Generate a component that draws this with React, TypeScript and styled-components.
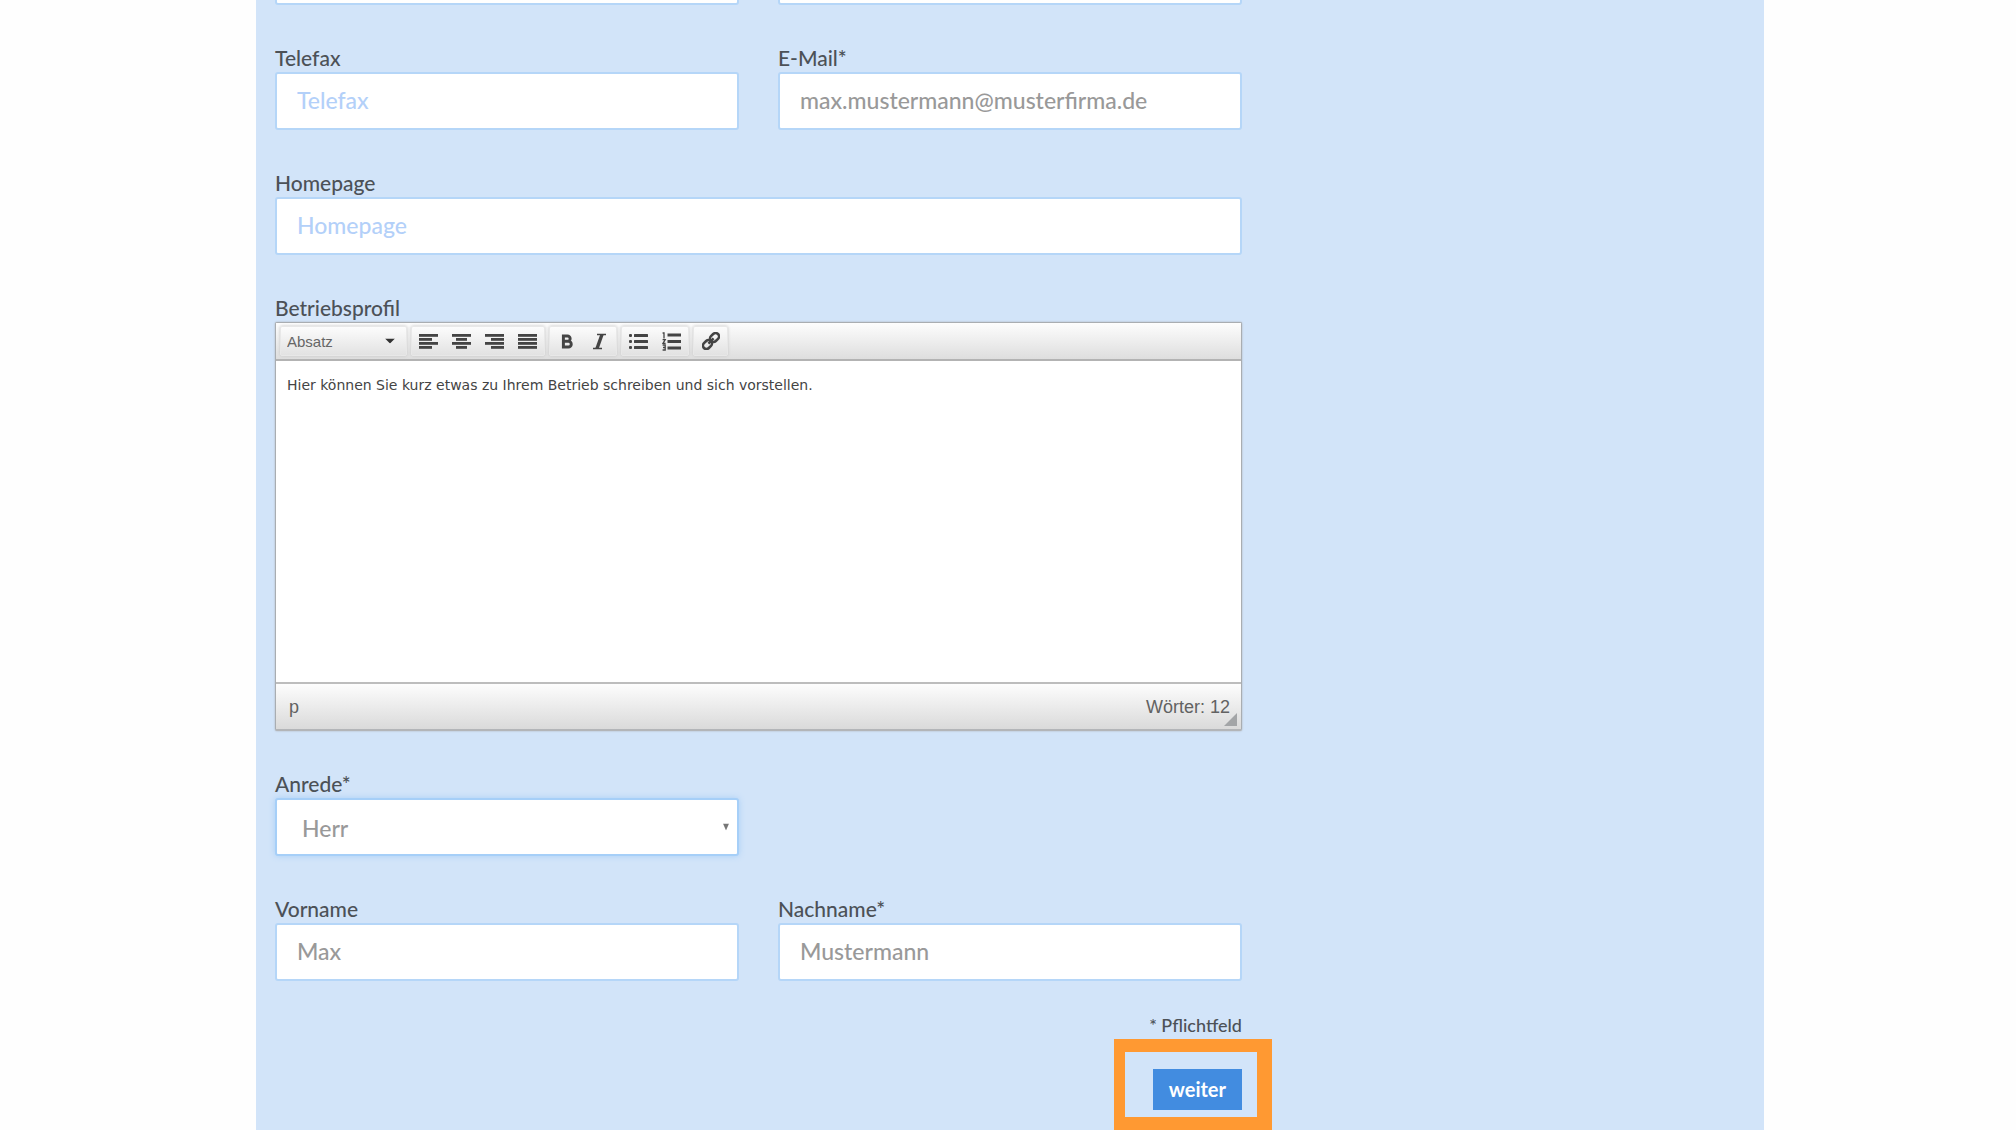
import React from "react";
import styled, { createGlobalStyle } from "styled-components";

const textFont = '"Lato", "Open Sans", sans-serif';
const uiFont = '"Liberation Sans", Arial, sans-serif';

const GlobalStyle = createGlobalStyle`
  *, *::before, *::after { box-sizing: border-box; }
  body { margin: 0; background: #fefefe; font-family: ${textFont}; font-weight: 500; color: #4c5157; }
  button, input, select, textarea { font: inherit; color: inherit; margin: 0; }
`;

const Page = styled.div`
  display: flex;
  justify-content: center;
  min-height: 100vh;
  padding-left: 4px;
  overflow: hidden;
`;

const Panel = styled.main`
  width: 100%;
  max-width: 1508px;
  padding: 0 19px;
  background: #d2e4f9;
`;

const Form = styled.form`
  display: flex;
  flex-direction: column;
  gap: 39px;
  max-width: 967px;
  margin-top: -53px;
`;

const Row = styled.div`
  display: grid;
  grid-template-columns: 1fr 1fr;
  column-gap: 39px;
`;

const Field = styled.div<{ $wide?: boolean }>`
  display: flex;
  flex-direction: column;
  min-width: 0;
  grid-column: ${(p) => (p.$wide ? "1 / -1" : "auto")};
`;

const Label = styled.label`
  font-size: 21px;
  line-height: 28px;
`;

const TextBox = styled.input`
  width: 100%;
  height: 58px;
  padding: 0 20px 2px;
  border: 2px solid #b5d6f8;
  border-radius: 3px;
  background: #fff;
  font-size: 23px;
  color: #999;
  outline: none;
  &::placeholder { color: #b3d0f9; opacity: 1; }
`;

const SelectWrap = styled.div`
  position: relative;
  display: flex;
`;

const SelectBox = styled.select`
  appearance: none;
  width: 100%;
  height: 58px;
  padding: 2px 24px 0 25px;
  border: 2px solid #a6cff8;
  border-radius: 3px;
  background: #fff;
  box-shadow: 0 0 6px #a9cff6;
  font-size: 23px;
  color: #999;
  outline: none;
`;

const Arrow = styled.svg<{ $right: number }>`
  position: absolute;
  right: ${(p) => p.$right}px;
  top: 50%;
  transform: translateY(-50%);
  pointer-events: none;
`;

const Editor = styled.div`
  display: flex;
  flex-direction: column;
  border: 1px solid #a9adb1;
  border-bottom: 2px solid #b3b5b8;
  border-radius: 2px;
  background: #fff;
  box-shadow: 0 0 2px #a9adb1;
`;

const Toolbar = styled.div`
  display: flex;
  align-items: center;
  gap: 4px;
  height: 38px;
  padding: 0 4px;
  border-bottom: 2px solid #b3b3b3;
  background: linear-gradient(#fdfdfd, #dedede);
`;

const Group = styled.div`
  position: relative;
  display: flex;
  height: 30px;
  border: 1px solid #e8e8e8;
  border-radius: 2px;
  background: linear-gradient(#fcfcfc, #e2e2e2);
  box-shadow: 0 0 3px #c4c4c4;
`;

const FormatSelect = styled.select`
  appearance: none;
  width: 125px;
  padding: 0 24px 0 6px;
  border: 0;
  background: transparent;
  font-family: ${uiFont};
  font-size: 15px;
  font-weight: 400;
  color: #666;
  outline: none;
`;

const Tool = styled.button`
  display: flex;
  align-items: center;
  justify-content: center;
  width: 33px;
  padding: 0;
  border: 0;
  background: transparent;
  color: #444;
`;

const Content = styled.textarea`
  display: block;
  height: 321px;
  padding: 13px 11px;
  border: 0;
  background: #fff;
  font-family: "DejaVu Sans", Verdana, sans-serif;
  font-size: 14px;
  font-weight: 400;
  line-height: 22px;
  color: #444;
  resize: none;
  outline: none;
`;

const StatusBar = styled.div`
  position: relative;
  display: flex;
  justify-content: space-between;
  height: 47px;
  padding: 11px 11px 0 13px;
  border-top: 2px solid #bdbdbd;
  background: linear-gradient(#fdfdfd, #dadada);
  font-family: ${uiFont};
  font-size: 18px;
  font-weight: 400;
  line-height: 24px;
  color: #626262;
`;

const Grip = styled.svg`
  position: absolute;
  right: 4px;
  bottom: 3px;
`;

const Footer = styled.div`
  display: flex;
  flex-direction: column;
  align-items: flex-end;
  margin-top: -8px;
`;

const Note = styled.p`
  margin: 0;
  font-size: 18px;
  line-height: 27px;
`;

const Frame = styled.div`
  margin-right: -30px;
  padding: 17px 15px 7px 28px;
  border: solid #ff9932;
  border-width: 13px 15px 13px 11px;
`;

const Submit = styled.button`
  display: block;
  height: 41px;
  padding: 0 16px 2px;
  border: 0;
  background: #428ce0;
  color: #fff;
  font-size: 20px;
  font-weight: 700;
`;

function Lines({ rows }: { rows: [number, number][] }) {
  return (
    <svg width="19" height="17" viewBox="0 0 19 17" fill="currentColor" aria-hidden="true">
      {rows.map(([x, w], i) => (
        <rect key={i} x={x} y={i * 4 + 1} width={w} height="2.8" />
      ))}
    </svg>
  );
}

const alignments: { name: string; rows: [number, number][] }[] = [
  { name: "Linksbündig", rows: [[0, 19], [0, 13], [0, 19], [0, 13]] },
  { name: "Zentriert", rows: [[0, 19], [4, 11], [0, 19], [4, 11]] },
  { name: "Rechtsbündig", rows: [[0, 19], [6, 13], [0, 19], [6, 13]] },
  { name: "Blocksatz", rows: [[0, 19], [0, 19], [0, 19], [0, 19]] },
];

function BoldIcon() {
  return (
    <svg width="12" height="17" viewBox="0 0 13 17" fill="none" stroke="currentColor" strokeWidth="3.2" aria-hidden="true">
      <path d="M2.6 2.5H7a2.8 2.8 0 0 1 0 5.8H2.6zM2.6 8.3H8a3.1 3.1 0 0 1 0 6.2H2.6z" />
    </svg>
  );
}

function ItalicIcon() {
  return (
    <svg width="15" height="17" viewBox="0 0 15 17" fill="none" stroke="currentColor" aria-hidden="true">
      <path d="M5 1.5h9M1 15.5h9" strokeWidth="1.6" />
      <path d="M10 1.5 5 15.5" strokeWidth="3.4" />
    </svg>
  );
}

function BulletIcon() {
  return (
    <svg width="19" height="17" viewBox="0 0 19 17" fill="currentColor" aria-hidden="true">
      {[1, 7, 13].map((y) => (
        <React.Fragment key={y}>
          <rect x="0" y={y} width="3" height="3" rx="1" />
          <rect x="5" y={y} width="14" height="3" rx="0.5" />
        </React.Fragment>
      ))}
    </svg>
  );
}

function NumberIcon() {
  return (
    <svg width="19" height="19" viewBox="0 0 19 19" fill="none" stroke="currentColor" aria-hidden="true">
      <path d="M5.5 3H19M5.5 9.5H19M5.5 16H19" strokeWidth="2.8" />
      <path d="M.6 1h1.4v5.4M.6 7.6h2.6L1 11.4h2.6M.6 13h2.6v5H.6M1 15.5h2" strokeWidth="1.3" />
    </svg>
  );
}

function LinkIcon() {
  return (
    <svg width="18" height="18" viewBox="0 0 20 20" fill="none" stroke="currentColor" strokeWidth="2.8" aria-hidden="true">
      <g transform="rotate(-45 10 10)">
        <rect x="-1" y="6.2" width="11" height="7.6" rx="3.8" />
        <rect x="10" y="6.2" width="11" height="7.6" rx="3.8" />
        <path d="M6 10h8" />
      </g>
    </svg>
  );
}

type FieldProps = {
  id: string;
  label: string;
  value?: string;
  placeholder?: string;
  type?: string;
  wide?: boolean;
};

function TextField({ id, label, value, placeholder, type = "text", wide }: FieldProps) {
  return (
    <Field $wide={wide}>
      <Label htmlFor={id}>{label}</Label>
      <TextBox id={id} type={type} defaultValue={value} placeholder={placeholder} />
    </Field>
  );
}

export default function App() {
  return (
    <>
      <GlobalStyle />
      <Page>
        <Panel>
          <Form onSubmit={(e) => e.preventDefault()}>
            <Row>
              <TextBox type="tel" aria-label="Telefon" />
              <TextBox type="tel" aria-label="Mobil" />
            </Row>
            <Row>
              <TextField id="fax" label="Telefax" placeholder="Telefax" />
              <TextField id="mail" label="E-Mail*" type="email" value="max.mustermann@musterfirma.de" />
            </Row>
            <Row>
              <TextField id="homepage" label="Homepage" placeholder="Homepage" wide />
            </Row>
            <Field>
              <Label htmlFor="profil">Betriebsprofil</Label>
              <Editor>
                <Toolbar>
                  <Group>
                    <FormatSelect aria-label="Format" defaultValue="p">
                      <option value="p">Absatz</option>
                    </FormatSelect>
                    <Arrow $right={11} width="10" height="5" viewBox="0 0 10 5" fill="#333">
                      <path d="M0 0h10L5 5z" />
                    </Arrow>
                  </Group>
                  <Group>
                    {alignments.map((a) => (
                      <Tool key={a.name} type="button" aria-label={a.name}>
                        <Lines rows={a.rows} />
                      </Tool>
                    ))}
                  </Group>
                  <Group>
                    <Tool type="button" aria-label="Fett"><BoldIcon /></Tool>
                    <Tool type="button" aria-label="Kursiv"><ItalicIcon /></Tool>
                  </Group>
                  <Group>
                    <Tool type="button" aria-label="Aufzählung"><BulletIcon /></Tool>
                    <Tool type="button" aria-label="Nummerierte Liste"><NumberIcon /></Tool>
                  </Group>
                  <Group>
                    <Tool type="button" aria-label="Link einfügen"><LinkIcon /></Tool>
                  </Group>
                </Toolbar>
                <Content
                  id="profil"
                  spellCheck={false}
                  defaultValue="Hier können Sie kurz etwas zu Ihrem Betrieb schreiben und sich vorstellen."
                />
                <StatusBar>
                  <span>p</span>
                  <span>Wörter: 12</span>
                  <Grip width="13" height="13" viewBox="0 0 13 13" fill="#a3a5a7" aria-hidden="true">
                    <path d="M13 0v13H0z" />
                  </Grip>
                </StatusBar>
              </Editor>
            </Field>
            <Row>
              <Field>
                <Label htmlFor="anrede">Anrede*</Label>
                <SelectWrap>
                  <SelectBox id="anrede" defaultValue="herr">
                    <option value="herr">Herr</option>
                    <option value="frau">Frau</option>
                  </SelectBox>
                  <Arrow $right={10} width="6" height="7" viewBox="0 0 6 7" fill="#777">
                    <path d="M0 0h6L3 7z" />
                  </Arrow>
                </SelectWrap>
              </Field>
            </Row>
            <Row>
              <TextField id="vorname" label="Vorname" value="Max" />
              <TextField id="nachname" label="Nachname*" value="Mustermann" />
            </Row>
            <Footer>
              <Note>* Pflichtfeld</Note>
              <Frame>
                <Submit type="submit">weiter</Submit>
              </Frame>
            </Footer>
          </Form>
        </Panel>
      </Page>
    </>
  );
}
